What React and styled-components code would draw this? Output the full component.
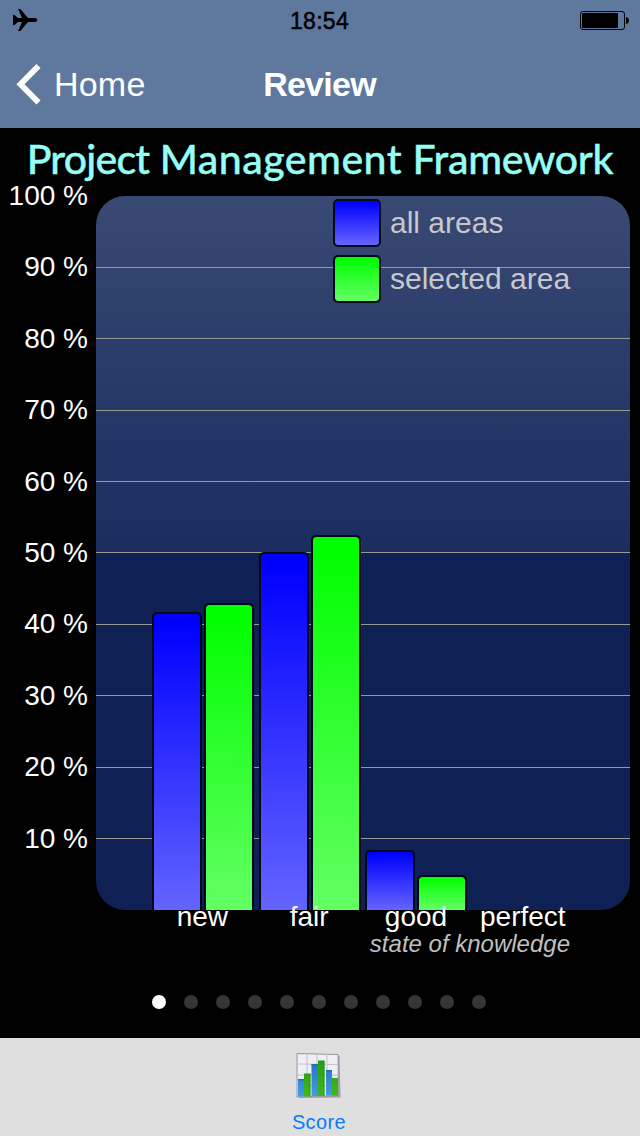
import React from 'react';
import styled, { createGlobalStyle } from 'styled-components';

const GlobalStyle = createGlobalStyle`
  * { box-sizing: border-box; }
  body { margin: 0; background: #000; font-family: "Liberation Sans", Arial, sans-serif; }
`;

const Screen = styled.main`
  width: 640px;
  height: 1136px;
  display: flex;
  flex-direction: column;
  overflow: hidden;
  background: #000;
  color: #fff;
`;

const StatusBar = styled.header`
  height: 40px;
  display: grid;
  grid-template-columns: 1fr auto 1fr;
  align-items: center;
  padding: 0 11px 0 12px;
  background: #5f789d;
  color: #000;
`;

const Clock = styled.time`
  padding: 1px 2px 0 0;
  font-size: 23px;
  line-height: 40px;
  letter-spacing: 0.3px;
  -webkit-text-stroke: 0.5px #000;
`;

const StatusIcon = styled.svg`
  display: block;
  justify-self: ${(p) => p.$side};
`;

const NavBar = styled.nav`
  height: 88px;
  display: grid;
  grid-template-columns: 1fr auto 1fr;
  align-items: center;
  padding: 0 17px 0 16px;
  background: #5f789d;
`;

const BackButton = styled.button`
  display: flex;
  align-items: center;
  gap: 12px;
  padding: 0;
  border: 0;
  background: none;
  color: #fff;
  font: 34px/40px "Liberation Sans", Arial, sans-serif;
  letter-spacing: 0.2px;
`;

const NavTitle = styled.h1`
  margin: 0;
  font-size: 34px;
  line-height: 40px;
  letter-spacing: -0.75px;
`;

const Content = styled.section`
  height: 910px;
  display: flex;
  flex-direction: column;
`;

const AreaTitle = styled.h2`
  height: 68px;
  margin: 0;
  padding-top: 3px;
  text-align: center;
  white-space: nowrap;
  color: #95fff5;
  font: 500 41px/56px Lato, sans-serif;
  -webkit-text-stroke: 0.4px #95fff5;
`;

const TitleWord = styled.span`
  letter-spacing: ${(p) => p.$tracking}px;
`;

const ChartRow = styled.div`
  display: flex;
  height: 714px;
`;

const Axis = styled.div`
  width: 96px;
  padding-right: 8px;
  display: grid;
  grid-template-rows: repeat(10, 71.4px);
  justify-items: end;
`;

const AxisLabel = styled.span`
  height: 32px;
  margin-top: -16px;
  white-space: nowrap;
  font-size: 28px;
  line-height: 32px;
`;

const Plot = styled.div`
  position: relative;
  width: 534px;
  height: 714px;
  padding: 0 53.4px;
  display: flex;
  align-items: flex-end;
  overflow: hidden;
  border-radius: 29px;
  background: linear-gradient(#384973 0, #1b2d5f 356px, #0e2054 357px, #0e2054 100%);
`;

const GridLines = styled.div`
  position: absolute;
  inset: -0.6px 0 0;
  display: grid;
  grid-template-rows: repeat(10, 71.4px);
`;

const GridLine = styled.i`
  height: 1px;
  background: ${(p) => (p.$hidden ? 'transparent' : '#979b93')};
`;

const BarGroup = styled.div`
  position: relative;
  width: 106.8px;
  display: flex;
  align-items: flex-end;
  justify-content: center;
  gap: 2px;
`;

const swatches = {
  all: 'linear-gradient(#0000ff 0, #0000ff 3%, #6464ff 100%)',
  selected: 'linear-gradient(#00ff00 0, #00ff00 3%, #64ff64 100%)',
};

const Bar = styled.div`
  width: 50px;
  border: 2px solid #030817;
  border-bottom-width: 0;
  border-radius: 5px 5px 0 0;
  background: ${(p) => swatches[p.$series]} padding-box;
`;

const Legend = styled.div`
  position: absolute;
  top: 3px;
  left: 237px;
  display: grid;
  gap: 8px;
`;

const LegendItem = styled.div`
  display: flex;
  align-items: center;
  gap: 9px;
  height: 48px;
  color: #c7c8cb;
  font-size: 30px;
  line-height: 50px;
  white-space: nowrap;
`;

const Swatch = styled.i`
  width: 48px;
  height: 48px;
  border: 2px solid #050918;
  border-radius: 5px;
  background: ${(p) => swatches[p.$series]} padding-box;
`;

const Categories = styled.div`
  position: relative;
  display: grid;
  grid-template-columns: repeat(4, 106.8px);
  margin: -9px 0 0 149px;
  text-align: center;
  font-size: 28px;
  line-height: 32px;
`;

const AxisCaption = styled.p`
  margin: -2px 70px 0 0;
  text-align: right;
  color: #c0c0c0;
  font-size: 24px;
  font-style: italic;
  line-height: 26px;
`;

const PageDots = styled.div`
  display: flex;
  justify-content: center;
  gap: 18px;
  margin-top: 38px;
  padding-right: 2px;
`;

const Dot = styled.i`
  width: 14px;
  height: 14px;
  border-radius: 50%;
  background: ${(p) => (p.$active ? '#fff' : '#363636')};
`;

const TabBar = styled.footer`
  height: 98px;
  display: flex;
  justify-content: center;
  padding-right: 2px;
  background: #dfdfdf;
`;

const Tab = styled.a`
  display: flex;
  flex-direction: column;
  align-items: center;
  padding-top: 14px;
  color: #087bfa;
  font-size: 20px;
  line-height: 24px;
  letter-spacing: 0.4px;

  svg { display: block; margin-bottom: 10px; }
`;

const titleWords = [
  { text: 'Project', tracking: -0.8 },
  { text: 'Management', tracking: 0.5 },
  { text: 'Framework', tracking: -0.3 },
];
const ticks = [100, 90, 80, 70, 60, 50, 40, 30, 20, 10];
const groups = [
  { name: 'new', all: 298, selected: 307 },
  { name: 'fair', all: 358, selected: 375 },
  { name: 'good', all: 60, selected: 35 },
  { name: 'perfect', all: 0, selected: 0 },
];

function ScoreIcon() {
  return (
    <svg width="46" height="48" viewBox="0 0 46 48">
      <defs>
        <linearGradient id="blueBar" x2="0" y2="1">
          <stop stopColor="#2776c2" />
          <stop offset="1" stopColor="#3f9de8" />
        </linearGradient>
        <linearGradient id="greenBar" x2="0" y2="1">
          <stop stopColor="#259e10" />
          <stop offset="1" stopColor="#42b71c" />
        </linearGradient>
      </defs>
      <path d="M2 3 43.500 4 44.500 45.500 3 46Z" fill="#8b8a91" opacity=".75" />
      <path d="M1 1.500 42 2.500 42.500 43.500 1 45Z" fill="#efeef5" stroke="#98969f" />
      <path d="M1 12 42 12.500M1 23H42M1 34 42 33.500M11 1.500V44M21 2V44M31 2V43" stroke="#c3c2d0" />
      <path d="M2 27h6.500v17.500H2zM15.500 12H22v32h-6.500zM30 18h6v25.500h-6z" fill="url(#blueBar)" />
      <path d="M2 27h6v1.500H2zM15.500 12H22v1.500h-6.500zM30 18h6v1.500h-6z" fill="#256aac" />
      <path d="M8 21.500h6.500v23H8zM22 8.500h6.500V44H22zM36 26h6v17.500h-6z" fill="url(#greenBar)" />
      <path d="M13.500 21.500h1v23h-1zM27.500 8.500h1V44h-1z" fill="#207311" opacity=".5" />
    </svg>
  );
}

export default function App() {
  return (
    <Screen>
      <GlobalStyle />
      <StatusBar>
        <StatusIcon $side="start" width="26" height="24" viewBox="0 0 26 24">
          <path
            d="M1 6h1.500l3.500 3h4L6 0h2.500l7.500 9h7c1.500 0 2.200 1 2.200 2s-.7 2-2.200 2h-7l-7.500 9H6l4-9H6l-3.500 3H1Z"
            fill="#000"
          />
        </StatusIcon>
        <Clock>18:54</Clock>
        <StatusIcon $side="end" width="49" height="19" viewBox="0 0 49 19">
          <rect x=".5" y=".5" width="44" height="18" rx="2.5" fill="none" stroke="#000" />
          <rect x="2" y="2" width="36" height="15" rx="1" />
          <path d="M46 6c4 .5 4 6.500 0 7Z" />
        </StatusIcon>
      </StatusBar>
      <NavBar>
        <BackButton>
          <svg width="26" height="42" viewBox="0 0 26 42">
            <path d="M22.500 3 4.500 21.300 22.500 39.500" fill="none" stroke="#fff" strokeWidth="5.800" />
          </svg>
          Home
        </BackButton>
        <NavTitle>Review</NavTitle>
      </NavBar>
      <Content>
        <AreaTitle>
          {titleWords.map((w, i) => (
            <React.Fragment key={w.text}>
              {i > 0 && ' '}
              <TitleWord $tracking={w.tracking}>{w.text}</TitleWord>
            </React.Fragment>
          ))}
        </AreaTitle>
        <ChartRow>
          <Axis>
            {ticks.map((t) => <AxisLabel key={t}>{t} %</AxisLabel>)}
          </Axis>
          <Plot>
            <GridLines>
              {ticks.map((t) => <GridLine key={t} $hidden={t === 100} />)}
            </GridLines>
            {groups.map((g) => (
              <BarGroup key={g.name}>
                {g.all > 0 && <Bar $series="all" style={{ height: g.all }} />}
                {g.selected > 0 && <Bar $series="selected" style={{ height: g.selected }} />}
              </BarGroup>
            ))}
            <Legend>
              <LegendItem><Swatch $series="all" />all areas</LegendItem>
              <LegendItem><Swatch $series="selected" />selected area</LegendItem>
            </Legend>
          </Plot>
        </ChartRow>
        <Categories>
          {groups.map((g) => <span key={g.name}>{g.name}</span>)}
        </Categories>
        <AxisCaption>state of knowledge</AxisCaption>
        <PageDots>
          {Array.from({ length: 11 }, (_, i) => <Dot key={i} $active={i === 0} />)}
        </PageDots>
      </Content>
      <TabBar>
        <Tab>
          <ScoreIcon />
          Score
        </Tab>
      </TabBar>
    </Screen>
  );
}
